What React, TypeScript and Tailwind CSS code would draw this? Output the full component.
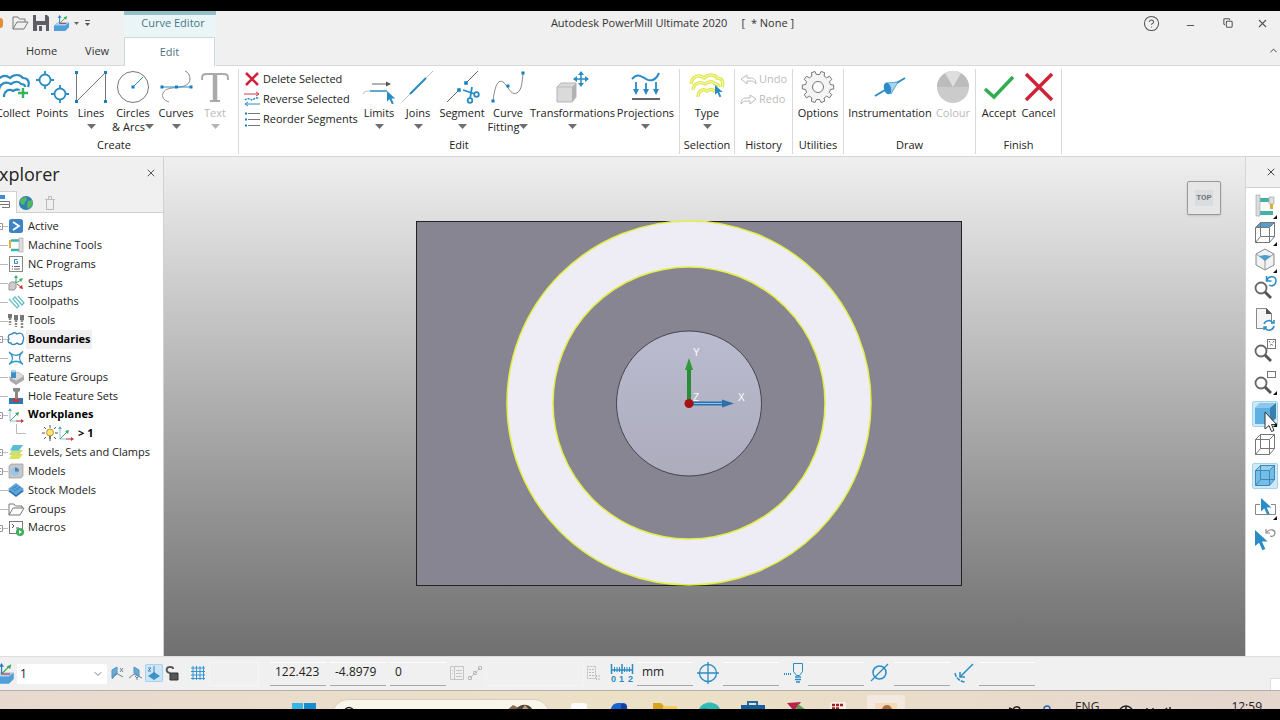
import type { ReactNode } from "react";
import { ChevronDown, ChevronUp, CircleHelp, Copy, Minus, X } from "lucide-react";

const BLUE = "#2a8cc4";

type IconProps = { w?: number; h?: number; box?: string; children: ReactNode };

function Icon({ w = 32, h = 32, box, children }: IconProps) {
  return (
    <svg aria-hidden="true" className="shrink-0 overflow-visible" fill="none" height={h} viewBox={box ?? `0 0 ${w} ${h}`} width={w}>
      {children}
    </svg>
  );
}

function Dots({ at, size = 3 }: { at: number[][]; size?: number }) {
  return (
    <>
      {at.map(([x, y]) => (
        <rect key={`${x}-${y}`} x={x - size / 2} y={y - size / 2} width={size} height={size} fill="#0f7fbf" />
      ))}
    </>
  );
}

function Waves({ color, width = 2 }: { color: string; width?: number }) {
  return (
    <g stroke={color} strokeWidth={width} fill="none">
      <path d="M0 13C1 5 8 3 13 7c4-4 10-4 13 0 5 0 7 4 5 9" />
      <path d="M2 19c1-7 7-9 12-6 4-3 8-3 10 0 2 0 4 1 4 3" />
      <path d="M7 26c0-6 5-9 9-6 3-2 6-2 8 1" />
    </g>
  );
}

// teeth are laid out around a 32px box, four corners to a tooth
function gearPath(teeth: number, outer: number, inner: number) {
  const step = (Math.PI * 2) / teeth;
  const points: string[] = [];
  for (let i = 0; i < teeth; i++) {
    const a = i * step;
    [
      [inner, -0.3],
      [outer, -0.2],
      [outer, 0.2],
      [inner, 0.3],
    ].forEach(([r, t]) => {
      points.push(`${(16 + r * Math.cos(a + t * step)).toFixed(1)} ${(16 + r * Math.sin(a + t * step)).toFixed(1)}`);
    });
  }
  return `M${points.join("L")}z`;
}

const cursorPath = "M0 0v14l3.500-3 3 6.500 2.500-1-3-6.500h5z";

const collectIcon = (
  <Icon>
    <Waves color={BLUE} width={2.2} />
    <path d="M26 17v10M21 22h10" stroke="#fff" strokeWidth="5" />
    <path d="M26 17v10M21 22h10" stroke="#35b55a" strokeWidth="2.400" />
  </Icon>
);

const pointsIcon = (
  <Icon>
    <g stroke={BLUE} strokeWidth="1.800">
      <circle cx="9" cy="9" r="5.500" />
      <path d="M9 0v4M9 14v4M0 9h4M14 9h4" />
      <circle cx="24" cy="23" r="5.500" />
      <path d="M24 14v4M24 28v4M15 23h4M29 23h4" />
    </g>
  </Icon>
);

const linesIcon = (
  <Icon>
    <path d="M1.500 1v29.500l29-29V31" stroke="#777" />
    <Dots at={[[1.5, 1.5], [30.5, 1.5], [1.5, 30.5], [30.5, 30.5]]} />
  </Icon>
);

const circlesIcon = (
  <Icon>
    <circle cx="16" cy="16" r="15.500" stroke="#777" />
    <path d="M16 16L26 6" stroke={BLUE} />
    <Dots at={[[16, 16]]} />
  </Icon>
);

const curvesIcon = (
  <Icon>
    <path d="M9 31C-1 28 1 18 12 17c10-1 18-2 18-9 0-4-2-7-5-8" stroke="#888" />
    <path d="M2 16h29" stroke={BLUE} />
    <Dots at={[[2, 16], [16.5, 16], [31, 16]]} />
  </Icon>
);

const textIcon = (
  <Icon>
    <path d="M3 9c0-5 0-6 6-6h14c6 0 6 1 6 6M11 30h10" stroke="#aaa" strokeWidth="2" />
    <path d="M16 3v27" stroke="#aaa" strokeWidth="4.500" />
  </Icon>
);

const limitsIcon = (
  <Icon>
    <path d="M9 13h16" stroke="#666" />
    <path d="M23 10.500l5 2.500-5 2.500z" fill="#555" />
    <path d="M0 23c1-3 4-3 7-3" stroke="#bbb" />
    <path d="M7 20h17" stroke={BLUE} strokeWidth="1.500" />
    <path d={cursorPath} fill={BLUE} transform="translate(24 20) scale(.75)" />
  </Icon>
);

const joinsIcon = (
  <Icon>
    <path d="M0 31L31 0" stroke="#bbb" />
    <path d="M8 23L24 7" stroke={BLUE} strokeWidth="2.200" />
  </Icon>
);

const segmentIcon = (
  <Icon>
    <path d="M1 31l12-12M20 12L32 0" stroke="#666" />
    <Dots at={[[13, 19], [20, 12]]} size={3.5} />
    <g stroke={BLUE} strokeWidth="1.800">
      <path d="M17 19l12 4M26 16l-2 12" />
      <circle cx="30.500" cy="23.500" r="2.300" />
      <circle cx="24" cy="29.500" r="2.300" />
    </g>
  </Icon>
);

const fittingIcon = (
  <Icon>
    <path d="M1 30C3 14 6 8 11 11c5 3 7 14 14 11 5-3 5-11 6-20" stroke="#888" />
    <Dots at={[[1, 30], [16, 15], [31, 2]]} />
  </Icon>
);

const transformIcon = (
  <Icon>
    <path d="M0 16l4-4h15v14l-4 5H0z" fill="#dadada" stroke="#b5b5b5" />
    <path d="M15 31V16l4-4v14z" fill="#b2b2b2" />
    <path d="M0 16h15" stroke="#bbb" />
    <path d="M24 1v14M17 8h14" stroke={BLUE} strokeWidth="1.500" />
    <path d="M24 0l3 4h-6zM24 16l3-4h-6zM16 8l4-3v6zM32 8l-4-3v6z" fill={BLUE} />
  </Icon>
);

const projectionsIcon = (
  <Icon>
    <path d="M2 8c5-6 9-3 14 0s10 1 13-6" stroke={BLUE} strokeWidth="2" />
    <path d="M6 11v8M16 12v7M26 11v8" stroke={BLUE} strokeWidth="1.800" />
    <path d="M3 18h6l-3 6zM13 18h6l-3 6zM23 18h6l-3 6z" fill={BLUE} />
    <path d="M2 28h28" stroke="#555" strokeWidth="1.800" />
  </Icon>
);

const typeIcon = (
  <Icon>
    <Waves color="#dfe64a" width={3.4} />
    <Waves color="#fbfcd2" width={1} />
    <path d={cursorPath} fill={BLUE} transform="translate(24 14) scale(.7)" />
  </Icon>
);

const gearIcon = (
  <Icon>
    <path d={gearPath(10, 15.8, 12.6)} fill="#f4f4f4" stroke="#777" strokeLinejoin="round" />
    <circle cx="16" cy="16" r="5.500" stroke="#777" fill="#fff" />
  </Icon>
);

const instrumentationIcon = (
  <Icon>
    <path d="M1 25L31 7" stroke={BLUE} strokeWidth="2" />
    <path d="M12 12l12-1-7 12z" fill="#a9d4ef" stroke={BLUE} strokeWidth=".7" />
    <ellipse cx="13.500" cy="17.500" rx="3.500" ry="6" transform="rotate(-15 13.500 17.500)" fill="#2b8bcb" />
  </Icon>
);

const colourIcon = (
  <Icon>
    <circle cx="16" cy="16" r="16" fill="#cbcbcb" />
    <path d="M0 16a16 16 0 0132 0z" fill="#bcbcbc" />
    <path d="M16 16L8 2a16 16 0 0116 0z" fill="#dedede" />
  </Icon>
);

const acceptIcon = (
  <Icon>
    <path d="M2 18l9 8L30 6" stroke="#31ad4f" strokeWidth="3.500" />
  </Icon>
);

const cancelIcon = (
  <Icon>
    <path d="M3 3l26 26M29 3L3 29" stroke="#cf2338" strokeWidth="3.500" />
  </Icon>
);

type RibbonButtonProps = {
  label: string;
  label2?: string;
  icon: ReactNode;
  width: string;
  menu?: boolean;
  disabled?: boolean;
};

function Caret({ dim }: { dim?: boolean }) {
  return (
    <svg aria-hidden="true" className="shrink-0" width="9" height="5" viewBox="0 0 9 5">
      <path d="M0 0h9L4.500 5z" fill={dim ? "#b5b5b5" : "#6e6e6e"} />
    </svg>
  );
}

function RibbonButton({ label, label2, icon, width, menu, disabled }: RibbonButtonProps) {
  return (
    <button
      className={`flex shrink-0 flex-col items-center whitespace-nowrap leading-[13px] ${width} ${disabled ? "text-[#b9b9b9]" : "text-[#222]"}`}
      disabled={disabled}
      type="button"
    >
      {icon}
      <span className="mt-[3px]">{label}</span>
      <span className="flex h-[14px] items-center">
        {label2}
        {menu && <Caret dim={disabled} />}
      </span>
    </button>
  );
}

function RibbonGroup({ title, children }: { title: string; children: ReactNode }) {
  return (
    <section aria-label={title} className="my-0.5 flex shrink-0 flex-col border-r border-[#d9d9d9]">
      <div className="flex h-[68px] pt-0.5">{children}</div>
      <h2 className="text-center leading-4">{title}</h2>
    </section>
  );
}

function RibbonRow({ label, icon, disabled }: { label: string; icon: ReactNode; disabled?: boolean }) {
  return (
    <button className={`flex h-5 items-center gap-[3px] whitespace-nowrap ${disabled ? "text-[#bbb]" : ""}`} disabled={disabled} type="button">
      {icon}
      {label}
    </button>
  );
}

function WorkplaneBlock({ size = 18 }: { size?: number }) {
  return (
    <Icon w={size} h={size} box="0 0 18 18">
      <path d="M1 11l4-3h12v5l-4 4H1z" fill="#4f9fd8" />
      <path d="M1 11l4-3h12l-4 3z" fill="#a9d4f2" />
      <path d="M7 9V2" stroke="#2a7cc0" />
      <path d="M7 9l6-6" stroke="#37a85a" />
      <path d="M7 9h7" stroke="#d34" />
      <path d="M5 3l2-3 2 3z" fill="#2a7cc0" />
      <path d="M11 3l4-2-1 4z" fill="#37a85a" />
    </Icon>
  );
}

function TitleArea() {
  return (
    <header className="flex h-[55px] shrink-0 bg-[#f0f0f0] text-[#333]">
      <div className="flex w-[124px] shrink-0 flex-col border-b border-[#d9d9d9]">
        <div className="flex h-6 items-center gap-1">
          <span className="h-2.5 w-[3px] rounded-r-full bg-[#e58b3c]" />
          <button aria-label="Open" className="ml-[5px]" type="button">
            <Icon w={17} h={16}>
              <path d="M1 14V2h5l1.500 2H13v3M1 14L5 7h11l-4 7z" stroke="#777" />
            </Icon>
          </button>
          <button aria-label="Save" type="button">
            <Icon w={16} h={16}>
              <path d="M0 0h14l2 2v14H0z" fill="#5d5d63" />
              <path d="M3 0h9v6H3zM4 10h9v6H4z" fill="#eee" />
              <path d="M6 11h3v5H6z" fill="#5d5d63" />
            </Icon>
          </button>
          <button aria-label="Workplane" className="flex items-center gap-1" type="button">
            <WorkplaneBlock size={17} />
            <Icon w={5} h={3}>
              <path d="M0 0h5L2.500 3z" fill="#666" />
            </Icon>
          </button>
          <button aria-label="Customise toolbar" className="ml-0.5" type="button">
            <Icon w={5} h={6}>
              <path d="M0 .5h5" stroke="#555" />
              <path d="M0 3h5L2.500 6z" fill="#555" />
            </Icon>
          </button>
        </div>
        <nav className="flex flex-1 items-center gap-7 pl-[26px] pt-0.5">
          <a href="#home">Home</a>
          <a href="#view">View</a>
        </nav>
      </div>
      <div className="flex w-[92px] shrink-0 flex-col border-t-4 border-[#92bfc8] bg-[#e9f5f7] text-center text-[#4a7683]">
        <div className="h-[22px] pl-1.5 leading-4">Curve Editor</div>
        <a className="mr-px flex-1 border-x border-t border-[#d0d8da] bg-white pt-1 leading-5" href="#edit">
          Edit
        </a>
      </div>
      <div className="flex flex-1 flex-col border-b border-[#d9d9d9]">
        <div className="flex h-6 items-center">
          <h1 className="flex-1 whitespace-pre pr-3.5 text-center">Autodesk PowerMill Ultimate 2020     [  * None ]</h1>
          <div className="flex w-[137px] items-center justify-between pr-[11px] text-[#555]">
            <button aria-label="Help" type="button"><CircleHelp size={17} strokeWidth={1.5} /></button>
            <button aria-label="Minimise" className="pl-2.5 pt-1" type="button"><Minus size={11} strokeWidth={2.5} /></button>
            <button aria-label="Restore" className="pl-3" type="button"><Copy className="-scale-x-100 -rotate-90" size={10} strokeWidth={2.5} /></button>
            <button aria-label="Close" className="pl-2" type="button"><X size={13} strokeWidth={2} /></button>
          </div>
        </div>
        <button aria-label="Collapse ribbon" className="mt-2.5 self-end pr-px" type="button"><ChevronUp size={11} /></button>
      </div>
    </header>
  );
}

const undoPath = "M1 6l6-4v3h4c4 0 5 3 5 6-1-2-3-3-5-3H7v3z";

function Ribbon() {
  return (
    <div className="flex h-[91px] shrink-0 overflow-hidden border-b border-[#d4d4d4] bg-white pt-px">
      <div className="-ml-2.5 flex shrink-0">
        <RibbonGroup title="Create">
          <div className="flex pl-1 pr-1">
            <RibbonButton icon={collectIcon} label="Collect" width="w-[38px]" />
            <RibbonButton icon={pointsIcon} label="Points" width="w-10" />
            <RibbonButton icon={linesIcon} label="Lines" menu width="w-[38px]" />
            <RibbonButton icon={circlesIcon} label="Circles" label2="& Arcs" menu width="w-[46px]" />
            <RibbonButton icon={curvesIcon} label="Curves" menu width="w-10" />
            <RibbonButton disabled icon={textIcon} label="Text" menu width="w-[38px]" />
          </div>
        </RibbonGroup>
      </div>
      <RibbonGroup title="Edit">
        <div className="-mt-0.5 flex w-[121px] shrink-0 flex-col pl-[5px]">
          <RibbonRow
            label="Delete Selected"
            icon={
              <Icon w={16} h={16}>
                <path d="M2 2l12 12M14 2L2 14" stroke="#cf2338" strokeWidth="2.500" />
              </Icon>
            }
          />
          <RibbonRow
            label="Reverse Selected"
            icon={
              <Icon w={16} h={16}>
                <path d="M0 3h15M12 1l3 2-3 2" stroke="#cf3b45" />
                <path d="M1 9c4-4 6 2 9-1 2-2 4-1 5 0" stroke={BLUE} strokeDasharray="2 1" strokeWidth="1.500" />
                <path d="M1 13h15M4 11l-3 2 3 2" stroke={BLUE} />
              </Icon>
            }
          />
          <RibbonRow
            label="Reorder Segments"
            icon={
              <Icon w={16} h={16}>
                <path d="M4 2.500h12M4 8.500h12M4 14.500h12" stroke="#777" />
                <Dots at={[[2, 2.5], [2, 8.5], [2, 14.5]]} size={2} />
              </Icon>
            }
          />
        </div>
        <RibbonButton icon={limitsIcon} label="Limits" menu width="w-[38px]" />
        <RibbonButton icon={joinsIcon} label="Joins" menu width="w-10" />
        <RibbonButton icon={segmentIcon} label="Segment" menu width="w-12" />
        <RibbonButton icon={fittingIcon} label="Curve" label2="Fitting" menu width="w-11" />
        <RibbonButton icon={transformIcon} label="Transformations" menu width="w-[85px]" />
        <RibbonButton icon={projectionsIcon} label="Projections" menu width="w-[61px]" />
        <div className="w-[3px]" />
      </RibbonGroup>
      <RibbonGroup title="Selection">
        <RibbonButton icon={typeIcon} label="Type" menu width="w-[54px]" />
      </RibbonGroup>
      <RibbonGroup title="History">
        <div className="-mt-0.5 flex w-[57px] flex-col pl-[5px]">
          <RibbonRow
            disabled
            label="Undo"
            icon={
              <Icon w={16} h={13}>
                <path d={undoPath} stroke="#bbb" />
              </Icon>
            }
          />
          <RibbonRow
            disabled
            label="Redo"
            icon={
              <Icon w={16} h={13}>
                <path d={undoPath} stroke="#bbb" transform="translate(17 0) scale(-1 1)" />
              </Icon>
            }
          />
        </div>
      </RibbonGroup>
      <RibbonGroup title="Utilities">
        <RibbonButton icon={gearIcon} label="Options" width="w-[50px]" />
      </RibbonGroup>
      <RibbonGroup title="Draw">
        <div className="flex pr-[5px]">
          <RibbonButton icon={instrumentationIcon} label="Instrumentation" width="w-[92px]" />
          <RibbonButton disabled icon={colourIcon} label="Colour" width="w-[34px]" />
        </div>
      </RibbonGroup>
      <RibbonGroup title="Finish">
        <div className="flex px-[3px]">
          <RibbonButton icon={acceptIcon} label="Accept" width="w-10" />
          <RibbonButton icon={cancelIcon} label="Cancel" width="w-[39px]" />
        </div>
      </RibbonGroup>
    </div>
  );
}

const axes = (
  <>
    <path d="M2 2v12h12" stroke="#8fbfdc" />
    <path d="M2 14l7-7" stroke="#4aa96a" />
    <path d="M7 6l4-1-1 4z" fill="#3aa860" />
    <path d="M8 14h6" stroke="#d44" />
    <path d="M13 12l3 2-3 2z" fill="#c33" />
    <path d="M0 4l2-3 2 3z" fill="#6ab" />
  </>
);

type TreeItem = { label: string; icon: ReactNode; bold?: boolean; expander?: boolean; selected?: boolean; child?: boolean };

const treeItems: TreeItem[] = [
  {
    label: "Active",
    expander: true,
    icon: (
      <>
        <rect x="1" y="1" width="14" height="14" rx="2.500" fill="#3d84c6" />
        <path d="M5 4l6 4-6 4" stroke="#fff" strokeWidth="1.800" />
      </>
    ),
  },
  {
    label: "Machine Tools",
    icon: (
      <>
        <path d="M3 3.500h9M3 13h10" stroke="#3cb3ab" strokeWidth="2.500" />
        <path d="M1 3h2v8H1z" fill="#e0b23c" />
        <path d="M11 1h4v14h-4z" fill="#ddd" stroke="#aaa" strokeWidth=".7" />
      </>
    ),
  },
  {
    label: "NC Programs",
    icon: (
      <>
        <rect x="1.500" y=".5" width="13" height="15" fill="#fff" stroke="#888" />
        <path d="M9.500 3.500h-3v4h3V5.500H8.500" stroke={BLUE} />
        <path d="M4 10.500h1M6 10.500h6M4 13h1M6 13h6" stroke="#666" />
      </>
    ),
  },
  {
    label: "Setups",
    icon: (
      <>
        <path d="M1 9l2-2h5v6l-2 2H1z" fill="#ccc" stroke="#999" />
        <path d="M8 8V1M8 8l5-3" stroke="#3da963" />
        <path d="M6 3l2-3 2 3zM11 4l4-1-2 4z" fill="#3da963" />
        <path d="M9 9l5 4" stroke="#c33" />
        <path d="M11 13l4 1-1-4z" fill="#c33" />
      </>
    ),
  },
  {
    label: "Toolpaths",
    icon: <path d="M1 5l8 9 2-2-6-7 2-2 7 8 2-2-6-7" stroke="#62bcc6" strokeWidth="1.200" />,
  },
  {
    label: "Tools",
    icon: (
      <>
        <path d="M0 1h4v4H0zM6 2h4v5H6zM12 2h4v5h-4z" fill="#777" />
        <path d="M2 5v7M8 7v7M14 7v8" stroke="#888" strokeDasharray="2 1" strokeWidth="2.500" />
      </>
    ),
  },
  {
    label: "Boundaries",
    bold: true,
    expander: true,
    selected: true,
    icon: <path d="M4 3c2-2 4-1 5 0 3-2 6 0 6 2 2 3 0 4 0 5 0 4-4 4-6 2-2 2-6 2-6 0-4 0-3-3-2-4-2-3 0-5 3-5z" stroke="#3485b8" strokeWidth="1.300" />,
  },
  {
    label: "Patterns",
    icon: <path d="M1 2Q8 9 15 1.500 8 8 15 14.500 8 8 1 14.500 8 8 1 2z" stroke="#3493c8" strokeWidth="1.200" />,
  },
  {
    label: "Feature Groups",
    icon: (
      <>
        <path d="M1 7l7 5 8-5v4l-8 5-6-4z" fill="#aaa" />
        <path d="M3 6l7-3 6 4-8 5z" fill="#ddd" stroke="#999" strokeWidth=".5" />
        <path d="M3 2h5v7H3z" fill="#3e8ec8" />
        <ellipse cx="5.500" cy="2" rx="2.500" ry="1.500" fill="#a9d3ee" />
      </>
    ),
  },
  {
    label: "Hole Feature Sets",
    icon: (
      <>
        <path d="M1 10h14v6H1z" fill="#2f77b1" />
        <path d="M5 10h6v4H5z" fill="#c43c39" />
        <path d="M5 0h7v3l-2 1v7H7V4L5 3z" fill="#888" />
      </>
    ),
  },
  { label: "Workplanes", bold: true, expander: true, icon: axes },
  { label: "> 1", bold: true, child: true, icon: axes },
  {
    label: "Levels, Sets and Clamps",
    expander: true,
    icon: (
      <>
        <path d="M1 15l3-5h11l-4 5z" fill="#d9e357" />
        <path d="M1 11l3-5h11l-4 5z" fill="#c9df7c" />
        <path d="M2 6.500L5 1h10l-4 5.500z" fill="#58bdd5" />
      </>
    ),
  },
  {
    label: "Models",
    expander: true,
    icon: (
      <>
        <path d="M1 3l2-2h12v12l-2 2H1z" fill="#c4c7cb" stroke="#999" strokeWidth=".7" />
        <circle cx="7" cy="8.500" r="4" fill="#9bc5e3" />
        <path d="M7 4.500a4 4 0 014 4H7z" fill="#4b83ac" />
      </>
    ),
  },
  {
    label: "Stock Models",
    icon: (
      <>
        <path d="M0 9l8-5 8 5-8 6z" fill="#2c74ae" />
        <path d="M0 7l8-6 8 6-8 6z" fill="#5ea4d8" />
        <path d="M4 7l5-3M6 9l6-4" stroke="#367fb8" />
      </>
    ),
  },
  {
    label: "Groups",
    icon: <path d="M1 14V3h5l1.500 2H14v2M1 14L5 7h11l-4 7z" stroke="#777" />,
  },
  {
    label: "Macros",
    expander: true,
    icon: (
      <>
        <rect x="1.500" y="1.500" width="13" height="12" stroke="#777" fill="#fff" />
        <path d="M4 4l2 2-2 2M8 8h3" stroke="#555" />
        <circle cx="12" cy="12" r="4" fill="#3cae5c" />
        <path d="M11 10l3 2-3 2z" fill="#fff" />
      </>
    ),
  },
];

function TreeRow({ item }: { item: TreeItem }) {
  return (
    <li className={`flex items-center whitespace-nowrap ${item.bold ? "font-bold text-black" : ""}`}>
      {item.child ? (
        <>
          <Icon w={42} h={18}>
            <path d="M16.500 0v9.500H26" stroke="#bbb" />
          </Icon>
          <Icon w={16} h={16}>
            <path d="M8 0v3M8 13v3M0 8h3M13 8h3M2 2l2 2M12 12l2 2M14 2l-2 2M2 14l2-2" stroke="#555" />
            <circle cx="8" cy="7.500" r="3.500" fill="#ffe46b" stroke="#b8962f" />
            <path d="M7 11h2v3H7z" fill="#777" />
          </Icon>
        </>
      ) : (
        <Icon w={8} h={16}>
          <path d={item.expander ? "M3 8.500h5" : "M0 8.500h8"} stroke="#bbb" />
          {item.expander && <path d="M0 5.500h2.500v6H0M0 8.500h1" stroke="#999" />}
        </Icon>
      )}
      <Icon w={16} h={16}>{item.icon}</Icon>
      <button className={`ml-0.5 h-full pl-0.5 pr-px ${item.selected ? "bg-[#efefef]" : ""}`} type="button">
        {item.label}
      </button>
    </li>
  );
}

function Explorer() {
  return (
    <aside className="flex w-[164px] shrink-0 flex-col overflow-hidden border-r border-[#d0d0d0] bg-white">
      <div className="flex h-[34px] items-center justify-between bg-[#f0f0f0] pr-1.5">
        <h2 className="-ml-[11px] text-[18px] leading-8 text-[#222]">Explorer</h2>
        <button aria-label="Close explorer" className="pb-0.5" type="button"><X className="text-[#555]" size={12} /></button>
      </div>
      <div className="flex h-[22px] items-center border-b border-[#d0d0d0] bg-[#f0f0f0]">
        <button aria-label="Tree view" className="h-[22px] w-[17px] border-r border-t border-[#d0d0d0] bg-white" type="button">
          <Icon w={10} h={16}>
            <path d="M0 1h5v4H0z" fill="#3f8fd0" />
            <path d="M0 7.500h9.500v3H0M2 13.500h7.500v-3" stroke="#777" />
          </Icon>
        </button>
        <button aria-label="Web" className="ml-0.5 mr-3 pt-0.5" type="button">
          <Icon w={14} h={14}>
            <circle cx="7" cy="7" r="7" fill="#2d82b4" />
            <path d="M3 2l4-1 1 3-2 2-1 3-3-1-1-3zM9 5l4-1 1 3-2 4-3 2-1-4z" fill="#57b560" />
          </Icon>
        </button>
        <button aria-label="Delete" className="pt-0.5" type="button">
          <Icon w={10} h={14}>
            <path d="M1.500 4v9.500h7V4M0 3.500h10M3.500 3V.5h3V3" stroke="#bbb" />
          </Icon>
        </button>
      </div>
      <ul className="mt-1 grid h-[320px] auto-rows-fr">
        {treeItems.map((item) => <TreeRow key={item.label} item={item} />)}
      </ul>
    </aside>
  );
}

function Viewport() {
  return (
    <main className="relative min-w-0 flex-1 bg-linear-to-b from-[#efefef] to-[#707070]">
      <svg aria-label="Model, top view" className="absolute inset-0 size-full" role="img" viewBox="0 0 1081 499">
        <defs>
          <linearGradient id="boss" x1="0" x2="0" y1="0" y2="1">
            <stop offset="0" stopColor="#bbbbd0" />
            <stop offset="1" stopColor="#acacbd" />
          </linearGradient>
        </defs>
        <rect x="252.500" y="64.500" width="545" height="364" fill="#878591" stroke="#222" />
        <circle cx="525" cy="246" r="159" stroke="#eeedf5" strokeWidth="46" fill="none" />
        <circle cx="525" cy="246" r="182" stroke="#e4ee43" strokeWidth="1.500" fill="none" />
        <circle cx="525" cy="246" r="136" stroke="#e4ee43" strokeWidth="1.500" fill="none" />
        <circle cx="525" cy="246.500" r="72.500" fill="url(#boss)" stroke="#444452" />
        <path d="M525 246v-36" stroke="#2b8c37" strokeWidth="4" />
        <path d="M525 201l4 12h-8z" fill="#2f9a3c" />
        <path d="M525 246.500h36" stroke="#2b70aa" strokeWidth="4" />
        <path d="M530 246.500h28" stroke="#8ec4ee" />
        <path d="M570 246.500l-12-4v8z" fill="#2b70aa" />
        <circle cx="525" cy="246.500" r="4.500" fill="#a91016" />
        <g className="fill-white font-['Liberation_Sans'] text-[10px]">
          <text x="529" y="199">Y</text>
          <text x="574" y="244">X</text>
          <text x="529" y="244">Z</text>
        </g>
      </svg>
      <button
        className="absolute right-6 top-6 flex size-[34px] items-center justify-center rounded-xs border border-[#999] bg-[#e6e6e6] shadow-sm"
        type="button"
      >
        <span className="bg-[#dadddf] px-px py-0.5 font-['Roboto'] text-[8px] font-bold text-[#777]">TOP</span>
      </button>
    </main>
  );
}

const cube = (fill: string, top: string, line: string) => (
  <>
    <path d="M1.500 6.500l5-5h14v14l-5 6h-14z" fill={fill} stroke={line} />
    <path d="M1.500 6.500l5-5h14l-5 5z" fill={top} stroke={line} />
    <path d="M15.500 6.500v15M6.500 1.500v14h14M6.500 15.500l-5 6" stroke={line} />
  </>
);

const magnifier = (
  <>
    <circle cx="7" cy="12" r="5.500" stroke="#666" strokeWidth="1.800" />
    <path d="M11 16l6 6" stroke="#555" strokeWidth="3" />
  </>
);

type ViewTool = { label: string; icon: ReactNode; menu?: boolean; active?: boolean };

const viewTools: { height: string; tools: ViewTool[] }[] = [
  {
    height: "h-[27px]",
    tools: [
      {
        label: "Machine tool view",
        menu: true,
        icon: (
          <>
            <path d="M6 6h9M6 19h13" stroke="#43b1a5" strokeWidth="4" />
            <path d="M2 1h4v21H2z" fill="#d8dcde" stroke="#aaa" strokeWidth=".7" />
            <path d="M15 3h5v7h-5z" fill="#ddd" stroke="#aaa" strokeWidth=".7" />
            <path d="M16 10h3v5h-3z" fill="#e0ad2d" />
          </>
        ),
      },
      { label: "View from top", menu: true, icon: cube("#fff", "#579fcb", "#777") },
      {
        label: "Isometric view",
        menu: true,
        icon: (
          <>
            <path d="M11 1l9 5v11l-9 5-9-5V6z" fill="#f0f2f3" stroke="#888" />
            <path d="M11 12v10M2 6l9 6 9-6" stroke="#999" />
            <path d="M5 8l6-1 6 1-6 5z" fill="#4a9dcc" />
          </>
        ),
      },
    ],
  },
  {
    height: "h-[29px]",
    tools: [
      {
        label: "Last view",
        icon: (
          <>
            {magnifier}
            <path d="M13 4c2-5 9-4 9 1 0 4-4 6-7 4M12.500 0v5h5" stroke={BLUE} strokeWidth="1.500" />
          </>
        ),
      },
    ],
  },
  {
    height: "h-8",
    tools: [
      {
        label: "Refresh",
        icon: (
          <>
            <path d="M2.500 1.500h10l5 5v15h-15z" fill="#f5f5f5" stroke="#888" />
            <path d="M12 1v6h6z" fill="#555" />
            <path d="M9 14h12v9H9z" fill="#fff" />
            <path d="M10 17a5 5 0 019-1M20 19a5 5 0 01-9 2M17 16h3v-3M10 23v-3h3" stroke={BLUE} strokeWidth="1.500" />
          </>
        ),
      },
      {
        label: "Resize to fit",
        icon: (
          <>
            {magnifier}
            <rect x="13.500" y=".5" width="8" height="9" stroke="#777" />
            <path d="M15 2l5 6M20 2l-5 6" stroke="#666" strokeDasharray="2 2" />
          </>
        ),
      },
      {
        label: "Zoom to box",
        menu: true,
        icon: (
          <>
            {magnifier}
            <rect x="13.500" y=".5" width="8" height="6" stroke="#777" />
          </>
        ),
      },
    ],
  },
  {
    height: "h-[31px]",
    tools: [
      {
        label: "Shaded",
        active: true,
        menu: true,
        icon: (
          <>
            <path d="M1 6l5-5h16v15l-6 6H1z" fill="#5fb0e2" />
            <path d="M1 6l5-5h16l-6 5z" fill="#8dc7ec" />
            <path d="M16 6l6-5v15l-6 6z" fill="#397fae" />
            <path className="fill-white stroke-[#333]" d="M11 10v17l4-3.500 2.500 6 2.500-1-2.500-6h5z" />
          </>
        ),
      },
      { label: "Wireframe", icon: cube("none", "none", "#777") },
      { label: "Transparent", active: true, icon: cube("#73bee8", "#8fd0f3", "#4386ae") },
    ],
  },
  {
    height: "h-8",
    tools: [
      {
        label: "Select by box",
        menu: true,
        icon: (
          <>
            <path d="M6 8.500H1.500v10h20v-10H17" stroke="#888" />
            <path d={cursorPath} fill={BLUE} transform="translate(7 2) scale(.95)" />
          </>
        ),
      },
      {
        label: "Previous selection",
        icon: (
          <>
            <path d={cursorPath} fill={BLUE} transform="translate(1 2) scale(1.150)" />
            <path d="M13 4c3-4 8-2 8 1s-3 4-5 3M12 1v4h4" stroke="#888" strokeWidth="1.200" />
          </>
        ),
      },
    ],
  },
];

function ViewToolbar() {
  return (
    <aside className="flex w-[35px] shrink-0 flex-col overflow-hidden border-l border-[#d5d5d5] bg-white">
      <div className="mb-1 flex h-[31px] shrink-0 items-center justify-end border-b border-[#d0d0d0] bg-[#f0f0f0] pr-[3px]">
        <button aria-label="Close toolbar" type="button"><X className="text-[#444]" size={12} /></button>
      </div>
      {viewTools.map((group) => (
        <div key={group.tools[0].label}>
          {group.tools.map((tool) => (
            <div key={tool.label} className={`flex items-center pl-1.5 ${group.height}`}>
              <button
                aria-label={tool.label}
                className={`relative flex size-[26px] items-center justify-center rounded-xs border ${tool.active ? "border-[#a5d3ee] bg-[#cde8f7]" : "border-transparent"}`}
                type="button"
              >
                <Icon w={23} h={23}>{tool.icon}</Icon>
                {tool.menu && (
                  <svg aria-hidden="true" className="absolute -bottom-px right-0" height="4" viewBox="0 0 4 4" width="4">
                    <path d="M4 0v4H0z" fill="#111" />
                  </svg>
                )}
              </button>
            </div>
          ))}
        </div>
      ))}
    </aside>
  );
}

function Field({ label, value = "" }: { label: string; value?: string }) {
  return (
    <input
      aria-label={label}
      className="h-6 w-14 shrink-0 border-b border-t border-b-[#a8a8a8] border-t-white bg-[#f0f0f0] pb-1 pl-[5px] text-[12px] text-[#222] outline-none"
      defaultValue={value}
      type="text"
    />
  );
}

type StatusButtonProps = { label: string; width?: string; active?: boolean; children: ReactNode };

function StatusButton({ label, width = "w-[18px]", active, children }: StatusButtonProps) {
  return (
    <button
      aria-label={label}
      className={`mb-0.5 flex h-[18px] shrink-0 items-center justify-center ${width} ${active ? "rounded-xs bg-[#cce6f7] ring-1 ring-inset ring-[#a5d3ee]" : ""}`}
      type="button"
    >
      {children}
    </button>
  );
}

function StatusBar() {
  return (
    <footer className="flex h-[35px] shrink-0 items-center overflow-hidden border-y border-b-[#b5b0ac] border-t-[#ddd] bg-[#f0f0f0]">
      <div className="flex w-[17px] shrink-0 justify-end pr-0.5"><WorkplaneBlock size={22} /></div>
      <div className="relative w-[90px] shrink-0">
        <select aria-label="Active workplane" className="h-5 w-full appearance-none bg-white pl-[3px] text-[12px] text-[#222]">
          <option>1</option>
        </select>
        <ChevronDown className="pointer-events-none absolute right-[3px] top-1 text-[#777]" size={12} />
      </div>
      <div className="ml-0.5 flex">
        <StatusButton label="X plane">
          <Icon w={14} h={14}>
            <path d="M1 4l5-3v7l-5 4z" fill="#6aabd6" stroke="#4796c9" />
            <path d="M5 7l7 4M5 7l-4 6M9 2l3 4M12 2L9 6" stroke="#6c8498" />
          </Icon>
        </StatusButton>
        <StatusButton label="Y plane">
          <Icon w={14} h={14}>
            <path d="M5 1l5 3v6L5 7z" fill="#6aabd6" stroke="#4796c9" />
            <path d="M5 8l-5 4M5 8l8 4M6 10l2 2 2-2M8 12v2" stroke="#6c8498" />
          </Icon>
        </StatusButton>
        <StatusButton active label="Z plane">
          <Icon w={14} h={14}>
            <path d="M1 10l6-4 6 4-6 4z" fill="#3e92ca" />
            <path d="M7 10V0M1 2h3L1 5h3" stroke="#4b84ad" />
          </Icon>
        </StatusButton>
        <StatusButton label="Lock plane">
          <Icon w={13} h={14}>
            <path d="M4 7h8v7H4z" fill="#555" stroke="#333" />
            <path d="M4 7C-1 6 0 0 5 1c2 0 2 2 2 2" stroke="#555" strokeWidth="2" />
          </Icon>
        </StatusButton>
      </div>
      <div className="ml-2">
        <StatusButton label="Grid">
          <Icon w={14} h={14}>
            <path d="M2 0v14M5.500 0v14M9 0v14M12.500 0v14M0 2h14M0 5.500h14M0 9h14M0 12.500h14" stroke="#3795d4" />
          </Icon>
        </StatusButton>
      </div>
      <div className="ml-0.5 h-6 w-[50px] shrink-0 border border-[#f6f6f6]" />
      <div className="ml-[11px] flex gap-1">
        <Field label="X" value="122.423" />
        <Field label="Y" value="-4.8979" />
        <Field label="Z" value="0" />
      </div>
      <div className="ml-0.5 flex">
        <StatusButton label="Position list">
          <Icon w={14} h={14}>
            <path d="M.5.5h13v13H.5zM4.500 1v12M6 4.500h6M6 7.500h6M6 10.500h6M2 4.500h1M2 7.500h1" stroke="#c4c4c4" />
          </Icon>
        </StatusButton>
        <StatusButton label="Measure">
          <Icon w={14} h={14}>
            <path d="M2 12l10-10M.5 10.500h3v3h-3zM10.500.5h3v3h-3zM5.500 5.500h3v3h-3z" stroke="#bbb" />
          </Icon>
        </StatusButton>
      </div>
      <div className="ml-0.5 h-6 w-[98px] shrink-0 border border-[#f4f4f4]" />
      <StatusButton label="Calculator">
        <Icon w={14} h={14}>
          <path d="M1.500.5h8v12h-8zM3 3.500h5M3 6.500h5M3 9.500h5M10.500 9v5M13 9v5" stroke="#bbb" strokeDasharray="2 1" />
        </Icon>
      </StatusButton>
      <StatusButton label="Units" width="w-[35px] pl-1">
        <Icon w={22} h={20}>
          <path d="M.5 1v10M21.500 1v10M11 1v10M.5 7h21" stroke={BLUE} strokeWidth="1.500" />
          <path d="M3.500 4v5M6 4v5M8.500 4v5M13.500 4v5M16 4v5M18.500 4v5" stroke={BLUE} />
          <g className="font-['Liberation_Sans'] text-[9px] font-bold" fill={BLUE}>
            <text x="0" y="19">0</text>
            <text x="8" y="19">1</text>
            <text x="17" y="19">2</text>
          </g>
        </Icon>
      </StatusButton>
      <Field label="Unit" value="mm" />
      <StatusButton label="Tolerance" width="w-[30px]">
        <Icon w={22} h={22}>
          <circle cx="11" cy="11" r="8.500" stroke={BLUE} strokeWidth="1.300" />
          <path d="M11 0v22M0 11h22" stroke={BLUE} strokeWidth="1.300" />
        </Icon>
      </StatusButton>
      <Field label="Tolerance value" />
      <StatusButton label="Thickness" width="w-[29px]">
        <Icon w={20} h={21}>
          <path d="M9.500 1.500h9v8l-3 4h-3l-3-4z" stroke={BLUE} />
          <path d="M11 15h6M11 17.500h6M12 20h4" stroke={BLUE} strokeWidth="1.500" />
          <path d="M0 12h8" stroke={BLUE} strokeDasharray="1 1" strokeWidth="2" />
        </Icon>
      </StatusButton>
      <Field label="Thickness value" />
      <StatusButton label="Diameter" width="w-[30px]">
        <Icon w={17} h={17}>
          <circle cx="8.500" cy="8.500" r="6.500" stroke={BLUE} strokeWidth="1.500" />
          <path d="M0 17L17 0" stroke={BLUE} strokeWidth="1.300" />
        </Icon>
      </StatusButton>
      <Field label="Diameter value" />
      <StatusButton label="Tip radius" width="w-[29px]">
        <Icon w={19} h={18}>
          <path d="M18 0L6 12M5 8v5h5" stroke={BLUE} strokeWidth="1.500" />
          <path d="M0 9c1 5 4 8 10 9" stroke={BLUE} strokeDasharray="4 1" strokeWidth="1.500" />
        </Icon>
      </StatusButton>
      <Field label="Tip radius value" />
      <div className="ml-auto h-3 w-2.5 shrink-0 self-end border-l border-t border-[#ddd] bg-white" />
    </footer>
  );
}

function Taskbar() {
  return (
    <div className="flex h-[18px] shrink-0 items-start overflow-hidden bg-linear-to-r from-[#e7d9cf] via-[#ece1c6] via-50% to-[#e5d6ce] text-[#222]">
      <button aria-label="Start" className="ml-[292px] mt-3" type="button">
        <Icon w={24} h={24}>
          <path d="M0 0h11v11H0zM0 12h11v11H0z" fill="#35b8e6" />
          <path d="M12 0h12v11H12zM12 12h12v11H12z" fill="#168dd2" />
        </Icon>
      </button>
      <button aria-label="Search" className="ml-4 mt-2 flex h-8 w-[218px] shrink-0 justify-between rounded-full border border-[#d8cfc0] bg-[#faf5ea] px-2.5 pt-1.5" type="button">
        <Icon w={12} h={12}>
          <circle cx="6" cy="6" r="4.500" stroke="#222" strokeWidth="1.500" />
        </Icon>
        <Icon w={36} h={14}>
          <path d="M2 6l8-7 8 4-3 9H2z" fill="#8b6c50" />
          <path d="M12 6c3-10 17-9 18 0z" fill="#51443a" />
          <path d="M17 6l5-7 5 6z" fill="#c89d6f" />
        </Icon>
      </button>
      <div className="ml-[19px] mt-3 flex shrink-0 gap-[19px]">
        <Icon w={24} h={24}>
          <rect x="2" width="16" height="20" rx="3" fill="#fbfbfb" />
        </Icon>
        <Icon w={24} h={24}>
          <path d="M-2 12C-2 4 1 0 6 0h5c5 0 4 5 4 8z" fill="#1765d1" />
          <path d="M9 1h3c4 0 3 5 3 8H9z" fill="#173fa0" />
        </Icon>
        <Icon w={24} h={24}>
          <path d="M-2 0h8l3 3h13v5H-2z" fill="#d6a41e" />
          <path d="M8 3h14v4H8z" fill="#f4cf55" />
        </Icon>
        <Icon w={24} h={24}>
          <path d="M0 9C3-4 21-3 23 9z" fill="#31bbb6" />
          <path d="M0 9c3-5 10-5 13 0z" fill="#1879c7" />
        </Icon>
        <Icon w={24} h={24}>
          <path d="M7 2V-1h9v3" stroke="#1c6ba3" strokeWidth="2" />
          <path d="M0 2h24v12H0z" fill="#155f9b" />
        </Icon>
        <Icon w={24} h={24}>
          <path d="M3 0l14-1-7 9z" fill="#b9234d" />
          <path d="M14 1l8 6H12z" fill="#5ba34e" />
        </Icon>
        <Icon w={24} h={24}>
          <rect x="3" y="-1" width="16" height="20" rx="2" fill="#f6f0ed" />
          <path d="M5 2h12M5 5.500h8" stroke="#a32020" strokeDasharray="3 1" strokeWidth="2.500" />
        </Icon>
      </div>
      <div className="ml-4 mt-1 h-9 w-[38px] shrink-0 rounded-sm bg-[#f3e9e1] px-2 pt-2">
        <Icon w={22} h={16}>
          <rect width="22" height="16" fill="#f6d9b8" />
          <circle cx="12" cy="7" r="5" fill="#a8703e" />
        </Icon>
      </div>
      <div className="ml-auto flex items-start pr-[18px] pt-2">
        <Icon w={66} h={12}>
          <path d="M0 9l3 1M4 10c2-3 6-3 7 0" stroke="#222" strokeWidth="1.500" />
          <circle cx="38" cy="10" r="3" stroke="#2a65b5" strokeWidth="1.500" />
        </Icon>
        <span className="text-[12px] leading-4">ENG</span>
        <Icon w={132} h={12}>
          <path d="M21 10c4-4 8-4 12 0M27 7v5M48 9v2M54 9v2M68 9l-3 3M71 8v3" stroke="#222" strokeWidth="1.500" />
        </Icon>
        <time className="text-[12px] leading-4">12:59</time>
      </div>
    </div>
  );
}

export default function App() {
  return (
    <div className="flex h-screen flex-col overflow-hidden bg-black py-[11px] font-['Open_Sans','Noto_Sans',sans-serif] text-[11px] text-[#222]">
      <TitleArea />
      <Ribbon />
      <div className="flex min-h-0 flex-1">
        <Explorer />
        <Viewport />
        <ViewToolbar />
      </div>
      <StatusBar />
      <Taskbar />
    </div>
  );
}
